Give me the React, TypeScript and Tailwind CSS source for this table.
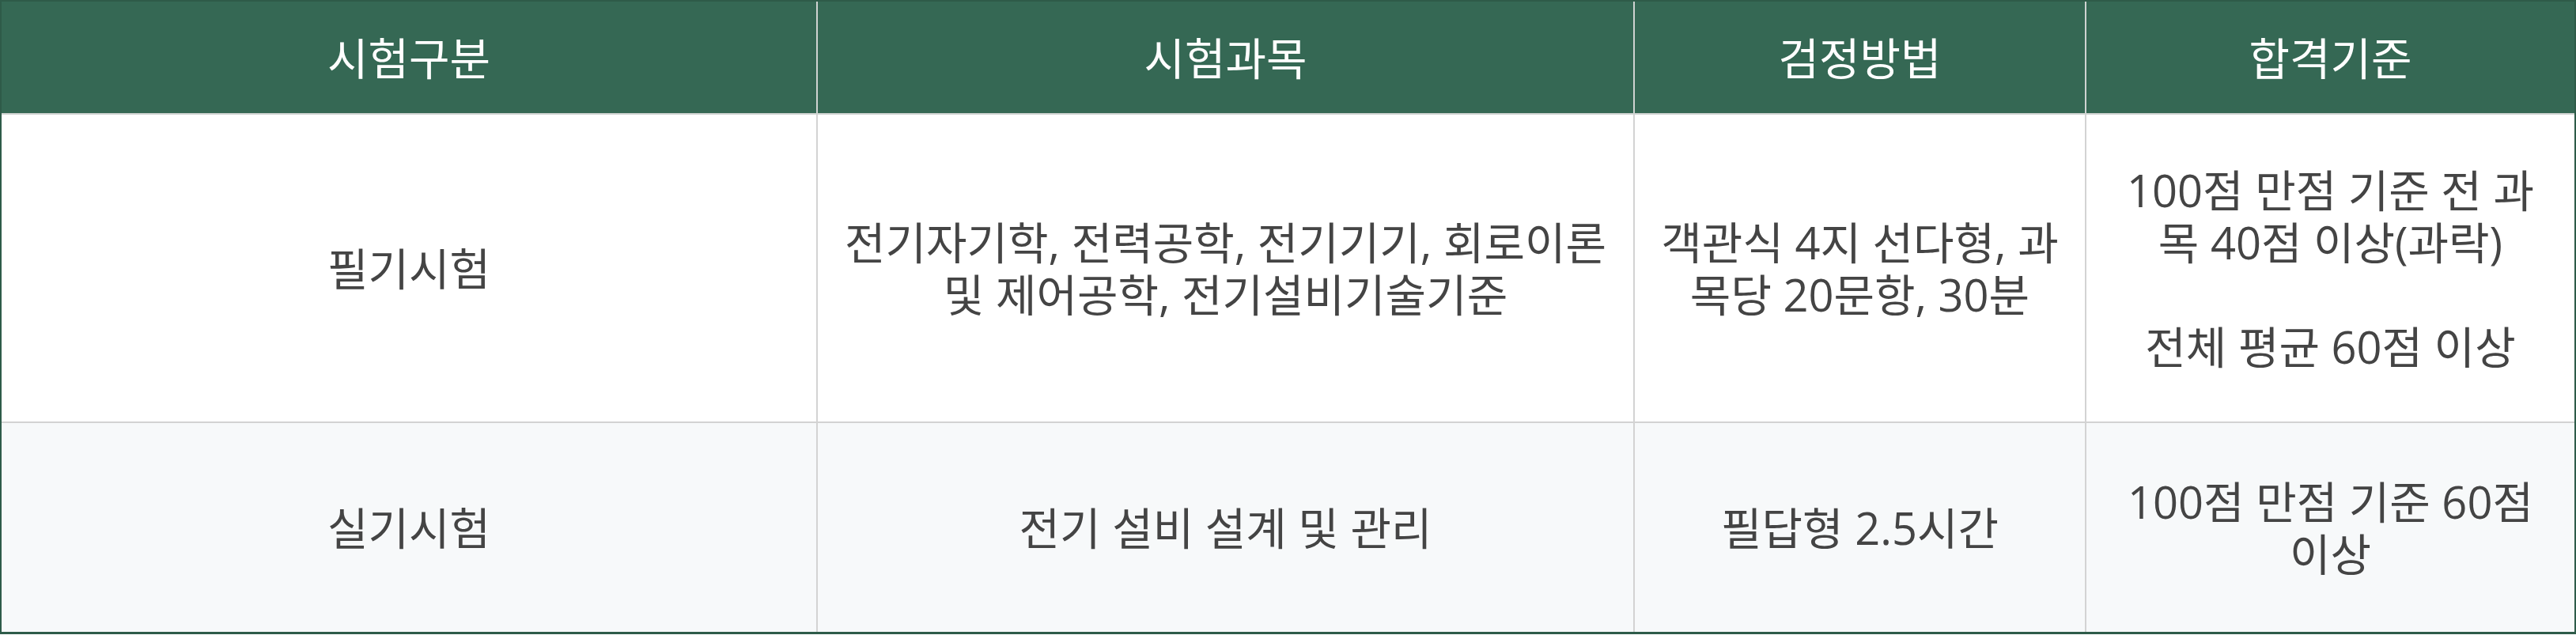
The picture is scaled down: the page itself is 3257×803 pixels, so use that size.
import React from "react";

const headers = ["시험구분", "시험과목", "검정방법", "합격기준"];

type Row = { cells: React.ReactNode[]; bg: string; h: string };

const rows: Row[] = [
  {
    bg: "bg-white",
    h: "h-[390px]",
    cells: [
      "필기시험",
      "전기자기학, 전력공학, 전기기기, 회로이론 및 제어공학, 전기설비기술기준",
      "객관식 4지 선다형, 과목당 20문항, 30분",
      (
        <>
          100점 만점 기준 전 과목 40점 이상(과락)
          <br />
          <br />
          전체 평균 60점 이상
        </>
      ),
    ],
  },
  {
    bg: "bg-[#f7f9fa]",
    h: "h-[264px]",
    cells: ["실기시험", "전기 설비 설계 및 관리", "필답형 2.5시간", "100점 만점 기준 60점 이상"],
  },
];

export default function App() {
  return (
    <div
      className="w-[3257px] bg-white"
      style={{ fontFamily: '"Open Sans", "Noto Sans CJK KR", sans-serif' }}
    >
      <div className="border-2 border-b-[3px] border-[#2e5b49] grid grid-cols-[1032px_1033px_571px_1fr]">
        {headers.map((h, i) => (
          <div
            key={h}
            className={`h-[143px] bg-[#356854] border-b-2 border-[#cfd3d1] flex items-center justify-center text-white text-[56px] leading-[66px] ${
              i < 3 ? "border-r-2" : ""
            }`}
          >
            {h}
          </div>
        ))}
        {rows.map((r, ri) =>
          r.cells.map((c, ci) => (
            <div
              key={`${ri}-${ci}`}
              className={`${r.h} ${r.bg} ${ri === 0 ? "border-b-2" : ""} ${
                ci < 3 ? "border-r-2" : ""
              } border-[#d3d3d3] flex items-center justify-center px-[26px] text-center text-[#444444] text-[56px] leading-[66px]`}
            >
              <div>{c}</div>
            </div>
          ))
        )}
      </div>
    </div>
  );
}
